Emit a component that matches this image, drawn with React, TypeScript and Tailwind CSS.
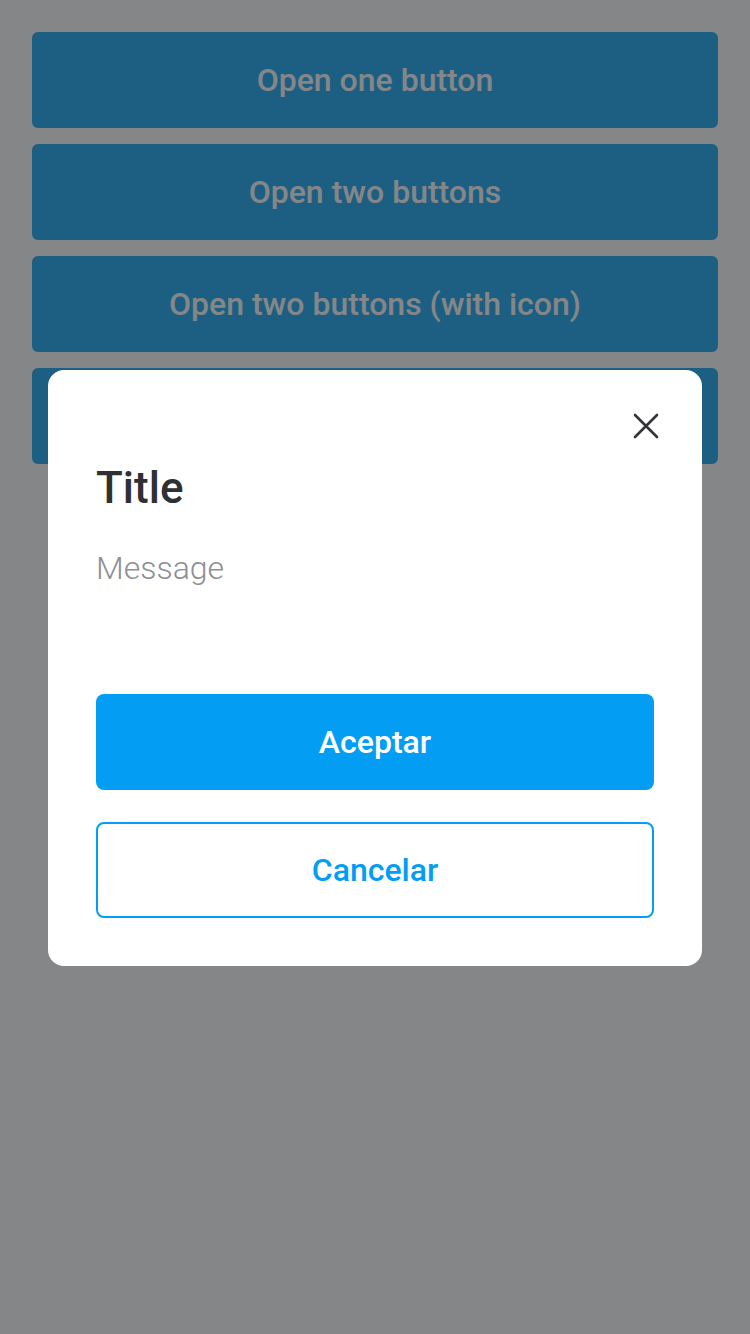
import React, { useState } from 'react';

const font = { fontFamily: 'Roboto, "Noto Sans", sans-serif' };

const menuItems = [
  'Open one button',
  'Open two buttons',
  'Open two buttons (with icon)',
  'Open custom content',
];

const CloseIcon: React.FC = () => (
  <svg width="26" height="26" viewBox="0 0 26 26" fill="none" stroke="#333438" strokeWidth={2.6} strokeLinecap="round">
    <path d="M2 2 L24 24 M24 2 L2 24" />
  </svg>
);

const App: React.FC = () => {
  const [open, setOpen] = useState(true);

  return (
    <div className="relative w-[750px] h-[1334px] bg-white overflow-hidden" style={font}>
      {/* Page behind the dialog */}
      <div className="flex flex-col gap-4 p-8">
        {menuItems.map(label => (
          <button
            key={label}
            onClick={() => setOpen(true)}
            className="h-24 w-full rounded-md bg-[#039ff4] text-white text-[32px] leading-[38px] font-medium"
          >
            {label}
          </button>
        ))}
      </div>

      {/* Overlay + modal */}
      {open && (
        <div className="absolute inset-0 bg-[rgba(48,49,51,0.59)]">
          <div className="absolute left-12 top-[370px] w-[654px] bg-white rounded-2xl px-12 pt-8 pb-12">
            <div className="flex justify-end -mr-4">
              <button onClick={() => setOpen(false)} className="w-12 h-12 flex items-center justify-center">
                <CloseIcon />
              </button>
            </div>
            <h2 className="mt-[10px] text-[44px] leading-[56px] font-medium text-[#2f3033]">Title</h2>
            <p className="mt-8 text-[32px] leading-10 font-light text-[#8e8f93]">Message</p>
            <div className="mt-[106px] flex flex-col gap-8">
              <button
                onClick={() => setOpen(false)}
                className="h-24 w-full rounded-lg bg-[#039ef4] text-white text-[32px] leading-[38px] font-medium"
              >
                Aceptar
              </button>
              <button
                onClick={() => setOpen(false)}
                className="h-24 w-full rounded-lg border-2 border-[#039ef4] text-[#039ef4] text-[32px] leading-[38px] font-medium"
              >
                Cancelar
              </button>
            </div>
          </div>
        </div>
      )}
    </div>
  );
};

export default App;
